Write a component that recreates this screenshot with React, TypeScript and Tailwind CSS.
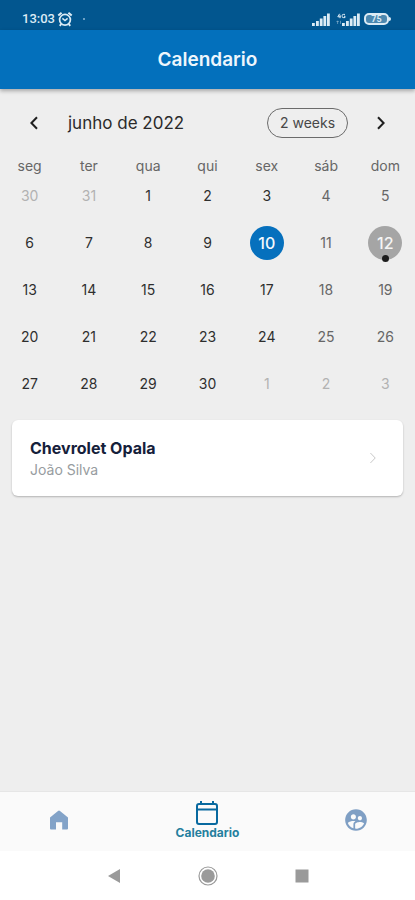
import { MdSupervisedUserCircle } from 'react-icons/md'
import clsx from 'clsx'

const WEEKDAYS = ['seg', 'ter', 'qua', 'qui', 'sex', 'sáb', 'dom']

const WEEKS = [
  [30, 31, 1, 2, 3, 4, 5],
  [6, 7, 8, 9, 10, 11, 12],
  [13, 14, 15, 16, 17, 18, 19],
  [20, 21, 22, 23, 24, 25, 26],
  [27, 28, 29, 30, 1, 2, 3],
]

const TODAY = 10
const SELECTED = 12

function isOutside(week: number, day: number) {
  return (week === 0 && day > 20) || (week === 4 && day < 20)
}

function Signal({ className }: { className?: string }) {
  return (
    <svg viewBox="0 0 18 13" className={clsx('h-[13px] w-[18px]', className)} fill="currentColor" aria-hidden="true">
      <rect x="0" y="10" width="2.8" height="3" />
      <rect x="4" y="8" width="2.8" height="5" />
      <rect x="7.8" y="5.5" width="2.8" height="7.5" />
      <rect x="11.4" y="3" width="2.8" height="10" />
      <rect x="15" y="0.5" width="2.8" height="12.5" />
    </svg>
  )
}

function StatusBar() {
  return (
    <div className="flex h-[30px] items-center bg-[#02568f] pt-2 pr-6 pl-[22px] text-[#dcebf5]">
      <span className="font-[Roboto] text-[13px] leading-4 font-medium">13:03</span>
      <svg viewBox="0 0 16 16" className="ml-0.5 size-4" fill="none" stroke="currentColor" strokeWidth="1.7" aria-hidden="true">
        <circle cx="8" cy="8.8" r="5.4" />
        <path d="M5.4 7.4 8 9.6l2.6-2.2" strokeWidth="1.4" />
        <path d="M1.3 4.6 4.6 1.7M14.7 4.6l-3.3-2.9M4.2 13l-1.4 1.8M11.8 13l1.4 1.8" strokeWidth="2" />
      </svg>
      <span className="ml-2.5 size-0.5 rounded-full bg-[#8fb8d4]" />
      <Signal className="ml-auto" />
      <svg viewBox="0 0 10 12" className="ml-1.5 h-3 w-2.5" fill="none" stroke="currentColor" aria-hidden="true">
        <path d="M3.6.8 1.8 3.8h3M4 1.8v3.4M9 1.4H7.2a1 1 0 0 0-1 1v1.2a1 1 0 0 0 1 1H9V3.2H8" />
        <path d="M1.6 11V8M.5 9l1.1-1.2L2.7 9M4.5 7.8v3" strokeWidth=".6" opacity=".7" />
      </svg>
      <Signal className="-ml-1" />
      <div className="ml-1 flex items-center">
        <div className="flex h-3 w-[25px] items-center justify-center rounded-[5px] border-2 border-current bg-[#4c88b0] font-[Roboto] text-[9px] leading-none font-bold">
          75
        </div>
        <div className="h-1 w-0.5 rounded-r-sm bg-current" />
      </div>
    </div>
  )
}

function Chevron({ left, className }: { left?: boolean; className?: string }) {
  return (
    <svg viewBox="0 0 8 14" className={className} fill="none" stroke="currentColor" aria-hidden="true">
      <path d={left ? 'M7 1.2 1.4 7 7 12.8' : 'M1 1.2 6.6 7 1 12.8'} />
    </svg>
  )
}

function Day({ week, day }: { week: number; day: number }) {
  const outside = isOutside(week, day)
  const today = !outside && day === TODAY
  const selected = !outside && day === SELECTED
  const weekend = WEEKS[week].indexOf(day) > 4

  return (
    <button
      className={clsx(
        'relative flex size-[34px] items-center justify-center rounded-full',
        today && 'bg-[#0670bd] text-base font-medium text-[#f4f8fc]',
        selected && 'bg-[#a5a5a5] text-base font-medium text-[#f5f5f5]',
        !today && !selected && 'text-sm',
        outside && 'text-[#b2b2b2]',
        !outside && !today && !selected && (weekend ? 'text-[#666666]' : 'text-[#2e2e2e]'),
      )}
    >
      {day}
      {selected && <span className="absolute -bottom-0.5 size-[7px] rounded-full bg-[#1c1c1c]" />}
    </button>
  )
}

function Calendar() {
  return (
    <section>
      <div className="flex items-center px-6 pt-[19px]">
        <button aria-label="Anterior" className="flex w-5 justify-center text-[#1f1f1f]">
          <Chevron left className="h-[14px] w-2 stroke-2" />
        </button>
        <h2 className="ml-6 flex-1 text-[17px] leading-6 text-[#2a2a2a]">junho de 2022</h2>
        <button className="h-[30px] w-[81px] rounded-full border border-[#6b6b6b] text-sm text-[#484848]">2 weeks</button>
        <button aria-label="Próximo" className="ml-[23px] flex w-5 justify-center text-[#1f1f1f]">
          <Chevron className="h-[14px] w-2 stroke-2" />
        </button>
      </div>
      <table className="mt-[18px] w-full table-fixed text-center">
        <thead>
          <tr>
            {WEEKDAYS.map((d) => (
              <th key={d} className="h-5 p-0 text-sm leading-5 font-normal text-[#666666]">{d}</th>
            ))}
          </tr>
        </thead>
        <tbody>
          {WEEKS.map((days, week) => (
            <tr key={week}>
              {days.map((day) => (
                <td key={day} className="p-0">
                  <div className="flex h-[47px] justify-center pt-[3px]">
                    <Day week={week} day={day} />
                  </div>
                </td>
              ))}
            </tr>
          ))}
        </tbody>
      </table>
    </section>
  )
}

function TabBar() {
  return (
    <nav className="grid h-[60px] grid-cols-3 border-t border-[#e6e6e6] bg-[#fafafa]">
      <a href="#inicio" aria-label="Início" className="flex items-center justify-center pr-5 pb-1 text-[#83a3c8]">
        <svg viewBox="0 0 18 20" className="h-5 w-[18px]" fill="currentColor" aria-hidden="true">
          <path d="M0 7.6 8 1a1.6 1.6 0 0 1 2 0l8 6.600V18.500a1 1 0 0 1-1 1h-4.800V12.300H6V19.500H1a1 1 0 0 1-1-1z" />
        </svg>
      </a>
      <a href="#calendario" className="flex flex-col items-center pt-[9px] text-[#08699f]">
        <svg viewBox="0 0 22 24" className="h-6 w-[22px]" fill="none" stroke="currentColor" strokeWidth="2" aria-hidden="true">
          <rect x="1" y="3" width="20" height="20" rx="2" />
          <path d="M1 8.500h20M5 0v3M17 0v3" />
        </svg>
        <span className="mt-px text-[12px] leading-[14px] font-bold text-[#247f9e]">Calendario</span>
      </a>
      <a href="#clientes" aria-label="Clientes" className="flex items-center justify-center pb-1 pl-5 text-[#7f9fc4]">
        <MdSupervisedUserCircle className="size-[26px]" />
      </a>
    </nav>
  )
}

function SystemNav() {
  return (
    <div className="flex h-[49px] items-center justify-center gap-[77px] bg-white text-[#9a9a9a]">
      <button aria-label="Voltar">
        <svg viewBox="0 0 14 14" className="size-3.5" fill="currentColor"><path d="M1 7 13 0v14z" /></svg>
      </button>
      <button aria-label="Home">
        <svg viewBox="0 0 20 20" className="size-5" fill="currentColor">
          <circle cx="10" cy="10" r="9" fill="none" stroke="currentColor" strokeWidth="1.2" />
          <circle cx="10" cy="10" r="6.8" />
        </svg>
      </button>
      <button aria-label="Recentes">
        <svg viewBox="0 0 14 14" className="size-3.5" fill="currentColor"><rect x=".5" y=".5" width="13" height="13" /></svg>
      </button>
    </div>
  )
}

export default function App() {
  return (
    <div className="flex min-h-screen flex-col bg-[#eeeeee] font-[Inter,sans-serif]">
      <StatusBar />
      <header className="flex h-[59px] items-center justify-center bg-[#0370bc] shadow-[0_2px_4px_rgba(0,0,0,0.3)]">
        <h1 className="text-[19px] leading-6 font-semibold text-[#eef6fc]">Calendario</h1>
      </header>
      <main className="flex-1">
        <Calendar />
        <a
          href="#chevrolet-opala"
          className="mx-3 mt-[9px] flex h-[76px] items-center rounded-md bg-white pr-[26px] pl-[18px] shadow-[0_1px_2px_rgba(0,0,0,0.25)]"
        >
          <div className="flex-1">
            <p className="text-base leading-6 font-bold text-[#15203a]">Chevrolet Opala</p>
            <p className="text-sm leading-5 text-[#979ca0]">João Silva</p>
          </div>
          <Chevron className="h-3 w-2 text-[#bdbdbd]" />
        </a>
      </main>
      <TabBar />
      <SystemNav />
    </div>
  )
}
